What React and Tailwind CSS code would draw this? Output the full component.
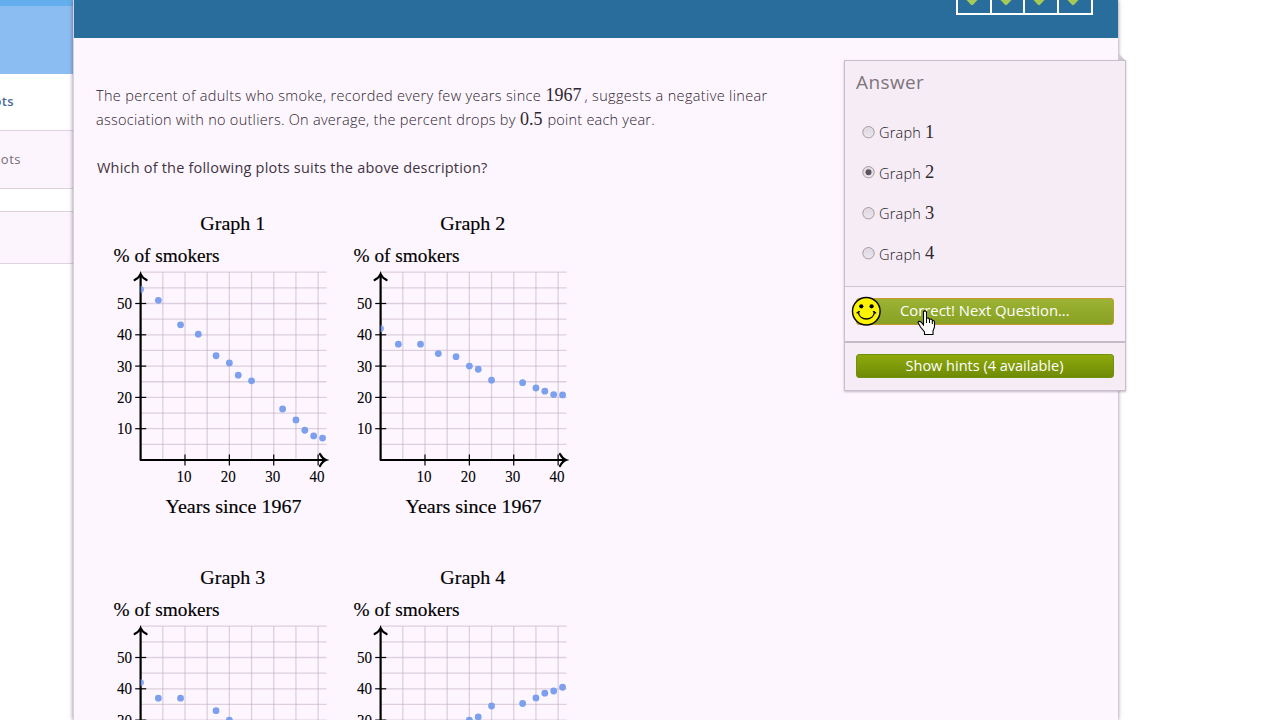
import React from "react";

const charts = [
  {
    title: "Graph 1",
    points: [[0, 54.5], [4, 51], [9, 43.2], [13, 40.2], [17, 33.3], [20, 31], [22, 27.1], [25, 25.3], [32, 16.3], [35, 12.8], [37, 9.5], [39, 7.7], [41, 7]],
  },
  {
    title: "Graph 2",
    points: [[0, 42], [4, 37], [9, 37], [13, 34], [17, 33], [20, 30], [22, 29], [25, 25.5], [32, 24.7], [35, 23], [37, 22], [39, 20.9], [41, 20.8]],
  },
  {
    title: "Graph 3",
    points: [[0, 42], [4, 37], [9, 37], [17, 33], [20, 30], [25, 25.5]],
  },
  {
    title: "Graph 4",
    points: [[4, 23], [9, 23], [20, 30], [22, 31], [25, 34.5], [32, 35.3], [35, 37.1], [37, 38.6], [39, 39.3], [41, 40.5]],
  },
];

const X0 = 44.6;
const Y0 = 252;
const px = (v) => X0 + v * 4.438;
const py = (v) => Y0 - v * 3.13;

function Chart({ title, points }) {
  const xs = [5, 10, 15, 20, 25, 30, 35, 40];
  const ys = [5, 10, 15, 20, 25, 30, 35, 40, 45, 50, 55, 60];
  return (
    <svg width="240" height="354" viewBox="0 0 240 354" className="block font-['Liberation_Serif',serif] text-black" fill="currentColor">
      <g fontSize="18.5" stroke="#000" strokeWidth="0.15">
        <text x="104.3" y="22" textLength="65" lengthAdjust="spacingAndGlyphs">{title}</text>
        <text x="17.5" y="54" textLength="106" lengthAdjust="spacingAndGlyphs">% of smokers</text>
        <text x="69.5" y="305" textLength="136" lengthAdjust="spacingAndGlyphs">Years since 1967</text>
      </g>
      <g stroke="#b9a5b9" strokeOpacity="0.48" strokeWidth="1.3">
        {xs.map((v) => <line key={v} x1={px(v)} x2={px(v)} y1={py(60)} y2={Y0} />)}
        {ys.map((v) => <line key={v} x1={X0} x2="230.5" y1={py(v)} y2={py(v)} />)}
      </g>
      <g fill="#7ca0ee">
        {points.slice(1).map(([x, y]) => <circle key={x} cx={px(x)} cy={py(y)} r="3.4" />)}
      </g>
      <g stroke="#000" fill="none">
        <path d={`M${X0} ${py(59)}V${Y0}H229`} strokeWidth="2.2" strokeLinejoin="round" />
        <path d={`M38.6 72Q43.4 69.5 ${X0} 66.2Q45.8 69.5 50.6 72`} strokeWidth="2.2" strokeLinecap="round" />
        <path d="M224 246Q226.5 250.8 230 252Q226.5 253.2 224 258" strokeWidth="2.2" strokeLinecap="round" />
        <g strokeWidth="1.2">
          {[10, 20, 30, 40, 50].map((v) => <line key={v} x1="39.2" x2="50.2" y1={py(v)} y2={py(v)} />)}
          {[10, 20, 30, 40].map((v) => <line key={v} x1={px(v)} x2={px(v)} y1="246.6" y2="257.4" />)}
        </g>
      </g>
      {points[0][0] === 0 && (
        <path d={`M${X0} ${py(points[0][1]) - 3.4}a3.4 3.4 0 0 1 0 6.8z`} fill="#7ca0ee" fillOpacity="0.85" />
      )}
      <g fontSize="16" stroke="#000" strokeWidth="0.1">
        {[10, 20, 30, 40, 50].map((v) => <text key={v} x="21" y={py(v) + 5.5} textLength="15" lengthAdjust="spacingAndGlyphs">{v}</text>)}
        {[10, 20, 30, 40].map((v) => <text key={v} x={px(v) - 8.5} y="274.3" textLength="15" lengthAdjust="spacingAndGlyphs">{v}</text>)}
      </g>
    </svg>
  );
}

function Option({ n, checked }) {
  return (
    <div className="flex h-[40.5px] items-center">
      <svg width="13" height="13" viewBox="0 0 13 13" className="-ml-[0.5px] shrink-0">
        <defs>
          <linearGradient id={`radio${n}`} x1="0" y1="0" x2="0" y2="1">
            <stop offset="0" stopColor="#e0d8e0" />
            <stop offset="1" stopColor="#eee6ee" />
          </linearGradient>
        </defs>
        <circle cx="6.5" cy="6.2" r="5.7" fill={`url(#radio${n})`} stroke="#a39ba3" strokeWidth="1" />
        {checked && <circle cx="6.5" cy="6.2" r="3" fill="#5d535d" />}
      </svg>
      <span className="ml-[4.5px] w-[42px] pt-0.5 text-[14.5px] font-light tracking-[0.2px] text-[#1a141a]">Graph</span>
      <span className="ml-1 pt-px font-['Liberation_Serif',serif] text-[18.5px] text-[#2e272e]">{n}</span>
    </div>
  );
}

function Smiley() {
  return (
    <svg width="30" height="30" viewBox="0 0 30 30" className="absolute -left-[6px] -top-[3px]">
      <circle cx="15.3" cy="15.3" r="13.8" fill="#fdf403" stroke="#080800" strokeWidth="1.5" />
      <circle cx="10.3" cy="10.3" r="2.1" />
      <circle cx="20.6" cy="10.3" r="2.1" />
      <path d="M7.3 16C8.3 25.2 22.5 25.2 23.5 16M6.1 16.8L8.3 15.7M22.5 15.7L24.6 16.8" fill="none" stroke="#080800" strokeWidth="1.5" strokeLinecap="round" />
    </svg>
  );
}

function Pointer() {
  return (
    <svg width="19" height="26" viewBox="0 0 19 26" className="absolute left-[60px] top-[11px] z-10">
      <path d="M6.5 1.5Q8.5 0 9.5 2V8.5Q11.5 7 12.5 9.5Q14.5 8 15.5 10.7Q17.5 10 17.5 12.5V17L16 21V24.5H7.5V22L3.5 17L1 12.5Q1.5 10.5 4 12L6.5 15Z" fill="#fff" stroke="#000" strokeWidth="1.1" />
      <path d="M9.5 8V13M12.5 9.5V13M15.3 11V14" stroke="#000" fill="none" />
    </svg>
  );
}

const num = "inline-block font-['Liberation_Serif',serif] text-[18px] leading-none font-normal text-[#2e272e]";

export default function App() {
  return (
    <div className="flex h-[720px] w-[1280px] overflow-hidden bg-white font-['Open_Sans',sans-serif]">
      <aside className="flex w-[73px] shrink-0 flex-col overflow-hidden">
        <div className="h-[6px] bg-[#63aeed]" />
        <div className="h-[68px] bg-[#8cbdf2]" />
        <div className="flex h-[57px] items-center justify-end border-b border-[#ddd2dd] pr-[59px] text-[13px] font-semibold tracking-[0.4px] text-[#496b99]">
          <span className="whitespace-nowrap">plots</span>
        </div>
        <div className="flex h-[58px] items-center justify-end border-b border-[#ddd2dd] bg-[#fcf5fd] pr-[52px] text-[13px] tracking-[0.5px] text-[#756d75]">
          <span className="whitespace-nowrap">plots</span>
        </div>
        <div className="h-[23px] border-b border-[#ddd2dd]" />
        <div className="h-[52px] border-b border-[#ddd2dd] bg-[#fcf5fd]" />
      </aside>

      <main className="z-10 flex w-[1045px] shrink-0 flex-col border-l border-[#d9cfe0] bg-[#fdf6ff] shadow-[0_0_4px_rgba(80,60,90,0.65)]">
        <header className="flex h-[38px] shrink-0 items-start justify-end bg-[#286d9b] pr-[25px]">
          <div className="flex h-[15px] gap-[2px] border-x-2 border-b-2 border-white bg-white">
            {[0, 1, 2, 3].map((i) => (
              <div key={i} className="flex w-[31.8px] justify-center bg-[#286d9b] pr-1">
                <svg width="12" height="6" viewBox="0 0 12 6" className="shrink-0"><path d="M0.5 0H11.5L7 4.8Q6 5.6 5 4.8Z" fill="#a5ca57" /></svg>
              </div>
            ))}
          </div>
        </header>

        <div className="flex">
          <section className="w-[770px] shrink-0 pl-[22px] pt-[46px]">
            <div className="whitespace-nowrap text-[14.5px] font-light leading-6 text-[#2c242c]">
              <p className="flex h-6 items-center">
                <span className="w-[449.5px] tracking-[0.33px]">The percent of adults who smoke, recorded every few years since</span>
                <span className={`${num} -mt-0.5 w-[39px]`}>1967</span>
                <span className="tracking-[0.34px]">, suggests a negative linear</span>
              </p>
              <p className="flex h-6 items-center">
                <span className="w-[424px] tracking-[0.28px]">association with no outliers. On average, the percent drops by</span>
                <span className={`${num} -mt-0.5 w-[27.5px]`}>0.5</span>
                <span className="tracking-[0.22px]">point each year.</span>
              </p>
              <p className="mt-6 h-6 pl-px font-normal tracking-[0.2px] text-[#3d353d]">Which of the following plots suits the above description?</p>
            </div>
            <div className="mt-[28px] grid w-[480px] grid-cols-[239.5px_240px]">
              {charts.map((c) => <Chart key={c.title} {...c} />)}
            </div>
          </section>

          <div className="flex w-[282px] shrink-0 flex-col pt-[15px]">
            <svg width="7" height="7" viewBox="0 0 7 7" className="ml-[274px] block shrink-0"><path d="M0 0L7 7H0Z" fill="#d2c7d5" /></svg>
            <div className="h-[331px] border border-[#c9bfca] bg-[#f6ecf6] shadow-[0_1px_2px_rgba(60,40,70,0.3)]">
              <div className="h-[226px] border-b border-[#cec4cf] px-[11px] pt-[7px]">
                <h2 className="text-[19px] font-medium leading-7 tracking-[0.4px] text-[#7d747d]">Answer</h2>
                <div className="pl-1.5 pt-4">
                  {[1, 2, 3, 4].map((n) => <Option key={n} n={n} checked={n === 2} />)}
                </div>
              </div>
              <div className="h-[56px] border-b-2 border-[#c5bac7] bg-[#f8effa] px-[11px] pt-[11px]">
                <div className="relative flex h-[27px] items-center rounded-[3px] border border-[#c49a2e] bg-linear-to-b from-[#9cb333] to-[#88a124] pb-0.5 pl-[43px] text-[14.8px] text-white">
                  <Smiley />
                  <span className="whitespace-nowrap">Correct! Next Question...</span>
                  <Pointer />
                </div>
              </div>
              <div className="px-[11px] pt-[11px]">
                <div className="flex h-6 items-center justify-center rounded-[3px] border border-[#71900b] bg-linear-to-b from-[#8fa90b] to-[#6f8b06] pr-px text-[14.5px] text-white">
                  <span className="whitespace-nowrap">Show hints (4 available)</span>
                </div>
              </div>
            </div>
          </div>
        </div>
      </main>
    </div>
  );
}
